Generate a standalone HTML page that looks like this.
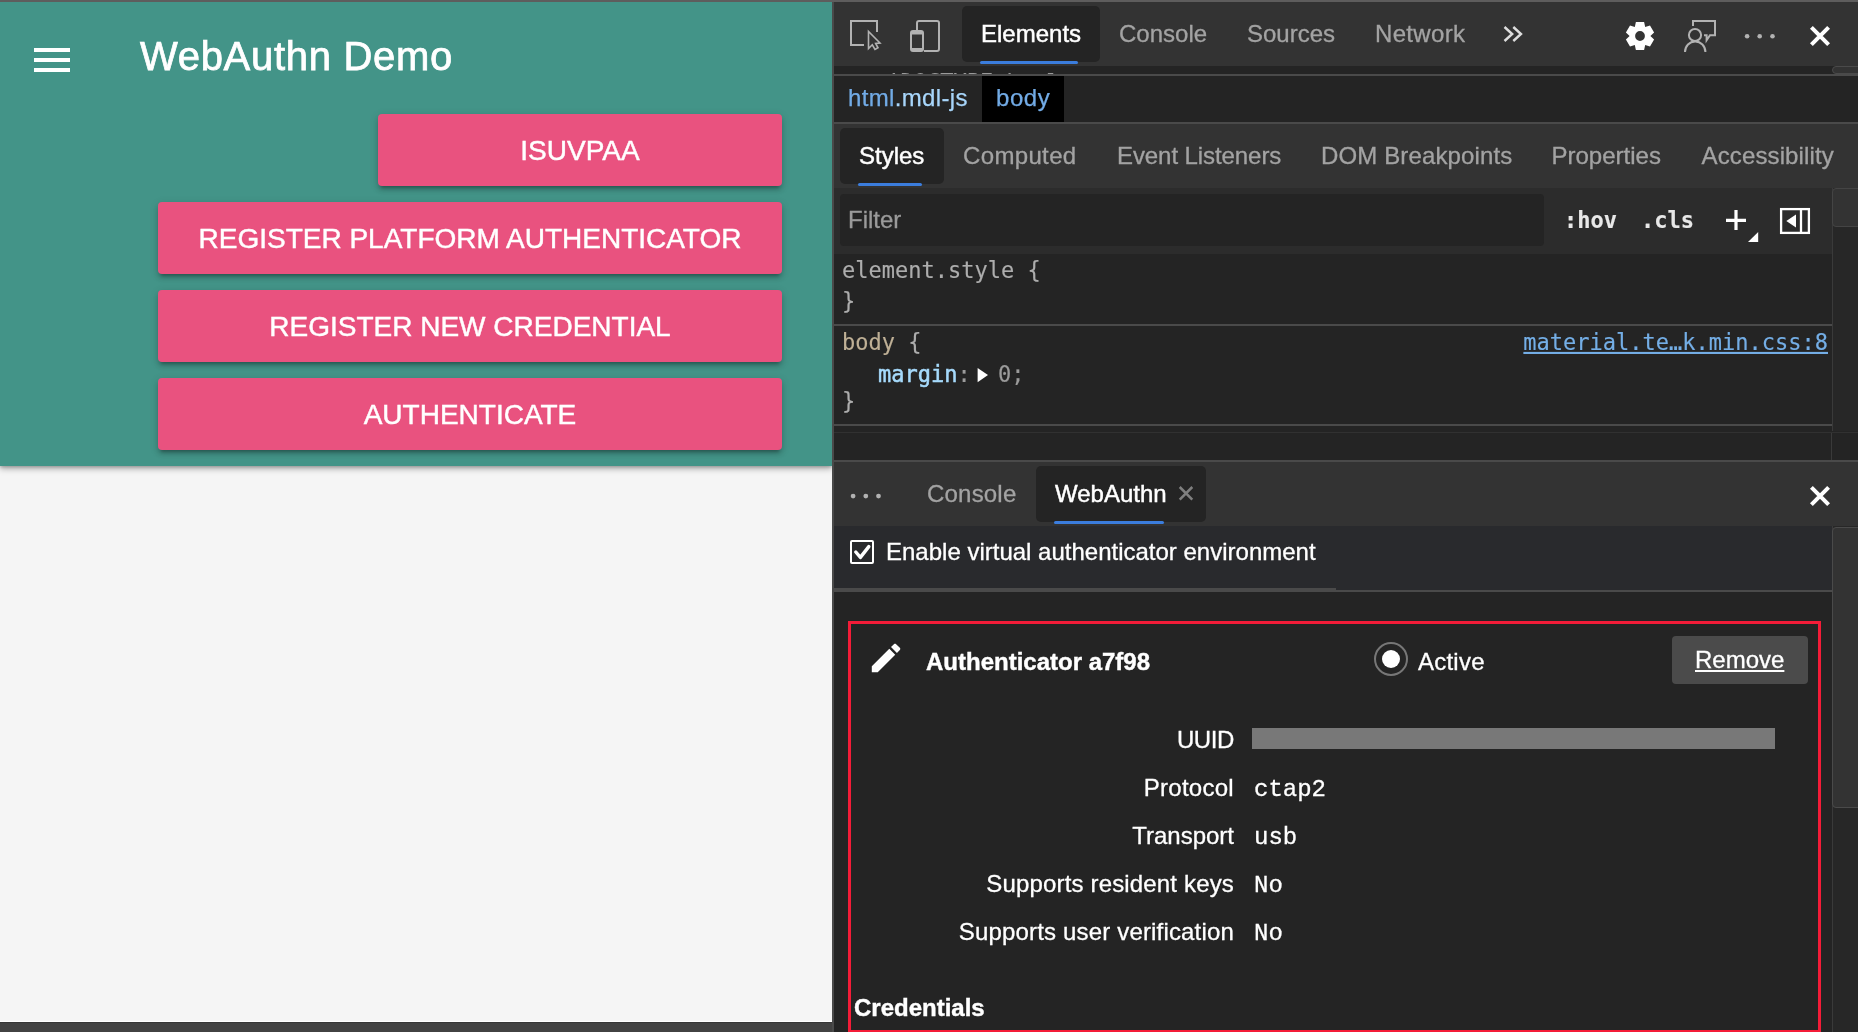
<!DOCTYPE html>
<html lang="en">
<head>
<meta charset="utf-8">
<title>WebAuthn Demo</title>
<style>
html,body{margin:0;padding:0;}
body{width:1858px;height:1032px;overflow:hidden;position:relative;background:#242424;font-family:"Liberation Sans",sans-serif;}
.abs{position:absolute;}
.t{position:absolute;white-space:nowrap;line-height:1;}
/* left page */
#page{will-change:transform;left:0;top:0;width:832px;height:1032px;background:#f5f5f5;overflow:hidden;}
#hdr{left:0;top:0;width:832px;height:466px;background:#439488;box-shadow:0 3px 6px rgba(0,0,0,.28),0 1px 3px rgba(0,0,0,.2);}
.bar{position:absolute;left:34px;width:36px;height:4px;background:#fff;}
#title{left:140px;top:36px;font-size:40px;color:#fff;letter-spacing:0.7px;-webkit-text-stroke:0.75px #fff;}
.btn{position:absolute;height:72px;background:#e9527f;border-radius:4px;box-shadow:0 4px 5px rgba(0,0,0,.16),0 2px 10px rgba(0,0,0,.12),0 5px 3px -3px rgba(0,0,0,.2);color:#fff;font-size:28px;text-align:center;line-height:73px;white-space:nowrap;-webkit-text-stroke:0.45px #fff;}
#botbar{left:0;top:1021px;width:832px;height:11px;background:#424242;border-top:1px solid #fff;box-shadow:inset 0 1px 0 #363636;box-sizing:border-box;}
#topstrip{left:0;top:0;width:1858px;height:2px;background:#5e5d5d;}
#vdiv{left:832px;top:2px;width:2px;height:1030px;background:#4a4a4a;}
/* devtools */
#dt{will-change:transform;left:834px;top:2px;width:1024px;height:1030px;background:#242424;overflow:hidden;}
.hl{position:absolute;background:#4a4a4a;height:2px;}
.tab{color:#a3a3a3;font-size:24px;}
.sel{color:#fff;}
.tabbg{position:absolute;background:#242424;border-radius:5px;}
.ul{position:absolute;background:#3b7ddd;height:3px;border-radius:2px;}
.mono{font-family:"DejaVu Sans Mono","Liberation Mono",monospace;font-size:22px;transform:scaleY(1.045);transform-origin:0 0;}
.cour{font-family:"Liberation Mono",monospace;font-size:24px;color:#fff;}
#dt .t,#dt .lbl{-webkit-text-stroke:.3px;}
#dt .mono{-webkit-text-stroke:.15px;}
#dt .sel{-webkit-text-stroke:.45px;}
.lbl{position:absolute;white-space:nowrap;line-height:1;color:#fff;font-size:24px;text-align:right;}
</style>
</head>
<body>
<!-- LEFT: page -->
<div id="page" class="abs">
  <div id="hdr" class="abs"></div>
  <div class="bar" style="top:48px"></div>
  <div class="bar" style="top:58px"></div>
  <div class="bar" style="top:68px"></div>
  <div id="title" class="t">WebAuthn Demo</div>
  <div class="btn" style="left:378px;top:114px;width:404px">ISUVPAA</div>
  <div class="btn" style="left:158px;top:202px;width:624px">REGISTER PLATFORM AUTHENTICATOR</div>
  <div class="btn" style="left:158px;top:290px;width:624px">REGISTER NEW CREDENTIAL</div>
  <div class="btn" style="left:158px;top:378px;width:624px">AUTHENTICATE</div>
  <div id="botbar" class="abs"></div>
</div>
<div id="vdiv" class="abs"></div>

<!-- RIGHT: devtools (coordinates inside are page coords minus 834,2) -->
<div id="dt" class="abs">
  <!-- main toolbar -->
  <div class="abs" id="tb1" style="left:0;top:0;width:1024px;height:64px;background:#333"></div>
  <div class="tabbg" style="left:128px;top:4px;width:138px;height:56px"></div>
  <div class="ul" style="left:146px;top:58.6px;width:98px;height:3.6px"></div>
  <div class="t tab sel" style="left:147px;top:20px">Elements</div>
  <div class="t tab" style="left:285px;top:20px">Console</div>
  <div class="t tab" style="left:413px;top:20px">Sources</div>
  <div class="t tab" style="left:541px;top:20px;letter-spacing:.32px">Network</div>
  <!-- strip under toolbar -->
  <div class="abs" style="left:0;top:64px;width:998px;height:8px;overflow:hidden"><div class="t mono" style="left:40px;top:4.8px;color:#9a9a9a;transform:none">&lt;!DOCTYPE html&gt;</div></div>
  <div class="hl" style="left:0;top:72px;width:1024px"></div>
  <!-- breadcrumbs -->
  <div class="abs" style="left:148px;top:74px;width:82px;height:46px;background:#000"></div>
  <div class="t" style="left:14px;top:84px;font-size:24px;letter-spacing:.35px;color:#72abe6;-webkit-text-stroke:.25px #72abe6">html<span style="color:#a8d6fb;-webkit-text-stroke:.25px #a8d6fb">.mdl-js</span></div>
  <div class="t" style="left:162px;top:84px;font-size:24px;letter-spacing:.55px;color:#72abe6;-webkit-text-stroke:.25px #72abe6">body</div>
  <div class="hl" style="left:0;top:120px;width:1024px"></div>
  <!-- styles tab bar -->
  <div class="abs" style="left:0;top:122px;width:1024px;height:64px;background:#333"></div>
  <div class="abs" style="left:0;top:186px;width:998px;height:66px;background:#2c2c2c"></div>
  <div class="tabbg" style="left:6px;top:126px;width:104px;height:56px"></div>
  <div class="ul" style="left:24px;top:181px;width:64px"></div>
  <div class="t tab sel" style="left:25px;top:142px">Styles</div>
  <div class="t tab" style="left:129px;top:142px;letter-spacing:.35px">Computed</div>
  <div class="t tab" style="left:283px;top:142px;letter-spacing:-.08px">Event Listeners</div>
  <div class="t tab" style="left:487px;top:142px;letter-spacing:.13px">DOM Breakpoints</div>
  <div class="t tab" style="left:717.5px;top:142px">Properties</div>
  <div class="t tab" style="left:867.5px;top:142px;letter-spacing:.13px">Accessibility</div>
  <!-- filter -->
  <div class="abs" style="left:6px;top:192px;width:704px;height:52px;background:#242424;border-radius:4px"></div>
  <div class="t" style="left:14px;top:206px;font-size:24px;color:#9a9a9a">Filter</div>
  <div class="t mono" style="left:730px;top:207px;color:#e8e8e8;font-weight:bold">:hov</div>
  <div class="t mono" style="left:807px;top:207px;color:#e8e8e8;font-weight:bold">.cls</div>
  <!-- styles content -->
  <div class="abs" style="left:0;top:251.5px;width:1024px;height:206.5px;background:#242424"></div>
  <div class="t mono" style="left:8px;top:257px;color:#adadad">element.style {</div>
  <div class="t mono" style="left:8px;top:288px;color:#adadad">}</div>
  <div class="hl" style="left:0;top:322px;width:998px"></div>
  <div class="t mono" style="left:8px;top:329px;color:#adadad"><span style="color:#bfb096">body</span> {</div>
  <div class="t mono" style="right:30px;top:329px;color:#74aee6;text-decoration:underline">material.te…k.min.css:8</div>
  <div class="t mono" style="left:44px;top:361px;color:#9b9b9b"><span style="color:#a6dafc;-webkit-text-stroke:0.5px #a6dafc">margin</span>:</div>
  <div class="t mono" style="left:164px;top:361px;color:#9b9b9b">0;</div>
  <div class="t mono" style="left:8px;top:388px;color:#adadad">}</div>
  <div class="hl" style="left:0;top:422px;width:998px"></div>
  <div class="hl" style="left:0;top:458px;width:1024px"></div>
  <!-- drawer tab bar -->
  <div class="abs" style="left:0;top:460px;width:1024px;height:64px;background:#333"></div>
  <div class="tabbg" style="left:202px;top:464px;width:170px;height:56px"></div>
  <div class="ul" style="left:220px;top:519px;width:110px"></div>
  <div class="t tab" style="left:93px;top:480px;letter-spacing:.2px">Console</div>
  <div class="t tab sel" style="left:221px;top:480px">WebAuthn</div>
  <!-- checkbox bar -->
  <div class="abs" style="left:0;top:524px;width:998px;height:64px;background:#292a2d"></div>
  <div class="abs" style="left:16px;top:538px;width:20px;height:20px;border:2.2px solid #fff;border-radius:2px;box-sizing:border-box;width:24px;height:24px"></div>
  <div class="t" style="left:52px;top:538px;font-size:24px;color:#fff">Enable virtual authenticator environment</div>
  <div class="hl" style="left:0;top:586px;width:502px;height:4px"></div>
  <div class="hl" style="left:502px;top:588px;width:496px"></div>
  <!-- authenticator box -->
  <div class="abs" style="left:14px;top:619px;width:967px;height:406px;border:3px solid #f41c38"></div>
  <div class="t" style="left:92px;top:648px;font-size:24px;font-weight:bold;color:#fff;letter-spacing:.0px;-webkit-text-stroke:.4px">Authenticator a7f98</div>
  <div class="abs" style="left:540px;top:640px;width:30px;height:30px;border:2px solid #777;border-radius:50%"></div>
  <div class="abs" style="left:548px;top:648px;width:18px;height:18px;background:#fff;border-radius:50%"></div>
  <div class="t" style="left:584px;top:648px;font-size:24px;color:#fff;letter-spacing:.23px">Active</div>
  <div class="abs" style="left:838px;top:634px;width:136px;height:48px;background:#4b4b4b;border-radius:4px"></div>
  <div class="t" style="left:861px;top:645.7px;font-size:24px;color:#fff;text-decoration:underline;text-underline-offset:1.6px;text-decoration-thickness:1.6px">Remove</div>
  <div class="lbl" style="right:624px;top:725.6px;letter-spacing:-.4px">UUID</div>
  <div class="abs" style="left:418px;top:726px;width:523px;height:21px;background:#787878"></div>
  <div class="lbl" style="right:624px;top:774.3px;letter-spacing:.28px">Protocol</div>
  <div class="t cour" style="left:420px;top:776.2px">ctap2</div>
  <div class="lbl" style="right:624px;top:822px">Transport</div>
  <div class="t cour" style="left:420px;top:824.2px">usb</div>
  <div class="lbl" style="right:624px;top:870px;letter-spacing:.16px">Supports resident keys</div>
  <div class="t cour" style="left:420px;top:872.2px">No</div>
  <div class="lbl" style="right:624px;top:918px;letter-spacing:.17px">Supports user verification</div>
  <div class="t cour" style="left:420px;top:920.2px">No</div>
  <div class="t" style="left:20px;top:994px;font-size:24px;font-weight:bold;color:#fff;-webkit-text-stroke:.4px">Credentials</div>
  <!-- scrollbars -->
  <div class="abs" style="left:998px;top:64.3px;width:30px;height:8px;background:#333;border:1px solid #4a4a4a;border-radius:5px 0 0 5px;box-sizing:border-box"></div>
  <div class="abs" style="left:998px;top:186px;width:26px;height:243px;background:#272727;border-left:1px solid #3a3a3a;box-sizing:border-box"></div>
  <div class="abs" style="left:998px;top:186.2px;width:30px;height:39px;background:#333;border:1px solid #444;border-radius:4px 0 0 4px;box-sizing:border-box"></div>
  <div class="abs" style="left:0;top:430px;width:1024px;height:1px;background:#313131"></div>
  <div class="abs" style="left:997px;top:431px;width:1px;height:27px;background:#3a3a3a"></div>
  <div class="abs" style="left:998px;top:524px;width:26px;height:510px;background:#272727;border-left:1px solid #3a3a3a;box-sizing:border-box"></div>
  <div class="abs" style="left:998px;top:524.5px;width:30px;height:281px;background:#333;border:1px solid #4a4a4a;border-radius:4px 0 0 4px;box-sizing:border-box"></div>
</div>
<svg class="abs" style="left:0;top:0" width="1858" height="1032" viewBox="0 0 1858 1032">
  <!-- inspect icon -->
  <g fill="none" stroke="#b2b2b2" stroke-width="2">
    <path d="M864,45 H851 V21 H877 V32"/>
    <path d="M868.5,31.5 V48.5 L872.3,44.8 L875,49.5 L878,47.8 L875.6,43.4 L880,43 Z" stroke-width="1.6" stroke-linejoin="miter"/>
  </g>
  <!-- device icon -->
  <g fill="none" stroke="#b2b2b2" stroke-width="2">
    <path d="M917,30 V23 Q917,21 919,21 H937 Q939,21 939,23 V49 Q939,51 937,51 H924"/>
    <rect x="911" y="31" width="12" height="20" rx="2"/>
    <path d="M911,33 H923 M911,49.5 H923" stroke-width="3"/>
  </g>
  <!-- chevrons -->
  <g fill="none" stroke="#dedede" stroke-width="2.4">
    <path d="M1504.5,27 L1512.2,34 L1504.5,41"/>
    <path d="M1513.3,27 L1521,34 L1513.3,41"/>
  </g>
  <!-- gear -->
  <g transform="translate(1640,36)"><path fill="#fff" fill-rule="evenodd" d="M-5.2,-9.0 L-4.1,-13.9 L4.1,-13.9 L5.2,-9.0 L10.0,-10.5 L14.1,-3.4 L10.4,-0.0 L14.1,3.4 L10.0,10.5 L5.2,9.0 L4.1,13.9 L-4.1,13.9 L-5.2,9.0 L-10.0,10.5 L-14.1,3.4 L-10.4,-0.0 L-14.1,-3.4 L-10.0,-10.5Z M4.9,0 A4.9,4.9 0 1,0 -4.9,0 A4.9,4.9 0 1,0 4.9,0Z"/></g>
  <!-- feedback icon -->
  <g fill="none" stroke="#b2b2b2" stroke-width="2">
    <circle cx="1695" cy="35" r="6.1"/>
    <path d="M1685,52 A10.2,10.6 0 0,1 1705.4,52"/>
    <path d="M1693,26 V21 H1715 V35.2 H1710 L1706.6,40.2 V35.2 H1704"/>
  </g>
  <!-- more dots -->
  <g fill="#b2b2b2">
    <circle cx="1747.1" cy="36.2" r="2.3"/><circle cx="1759.7" cy="36.2" r="2.3"/><circle cx="1772.5" cy="36.2" r="2.3"/>
    <circle cx="853.1" cy="496.1" r="2.4"/><circle cx="865.8" cy="496.1" r="2.4"/><circle cx="878.5" cy="496.1" r="2.4"/>
  </g>
  <!-- close X top / drawer -->
  <g stroke="#fff" stroke-width="4" fill="none">
    <path d="M1811.4,27.4 L1828.6,44.6 M1828.6,27.4 L1811.4,44.6"/>
    <path d="M1811.4,487.4 L1828.6,504.6 M1828.6,487.4 L1811.4,504.6"/>
  </g>
  <!-- tab close x -->
  <path d="M1179.7,487 L1192.3,499.6 M1192.3,487 L1179.7,499.6" stroke="#7f7f7f" stroke-width="2.5" fill="none"/>
  <!-- plus + corner triangle -->
  <path d="M1726,220.3 H1746 M1736,210 V230" stroke="#fff" stroke-width="3.2" fill="none"/>
  <path d="M1748,242 H1758.2 V232 Z" fill="#fff"/>
  <!-- toggle sidebar -->
  <g fill="none" stroke="#fff" stroke-width="2.3">
    <rect x="1781.1" y="209.1" width="27.8" height="23.8"/>
    <path d="M1801,209 V233"/>
  </g>
  <path d="M1786.3,221 L1796,214.6 V227.4 Z" fill="#fff"/>
  <!-- margin expand triangle -->
  <path d="M977.6,368 L988,375.1 L977.6,382.2 Z" fill="#fff"/>
  <!-- checkbox check -->
  <path d="M855.8,552 L860.4,557.4 L868.8,546.6" stroke="#fff" stroke-width="3.4" stroke-linecap="round" stroke-linejoin="round" fill="none"/>
  <!-- pencil -->
  <g transform="translate(867.05,638.95) scale(1.583)"><path fill="#fff" d="M3 17.25V21h3.75L17.81 9.94l-3.75-3.75L3 17.25zM20.71 7.04c.39-.39.39-1.02 0-1.41l-2.34-2.34c-.39-.39-1.02-.39-1.41 0l-1.83 1.83 3.75 3.75 1.83-1.83z"/></g>
</svg>
<div id="topstrip" class="abs"></div>
</body>
</html>
